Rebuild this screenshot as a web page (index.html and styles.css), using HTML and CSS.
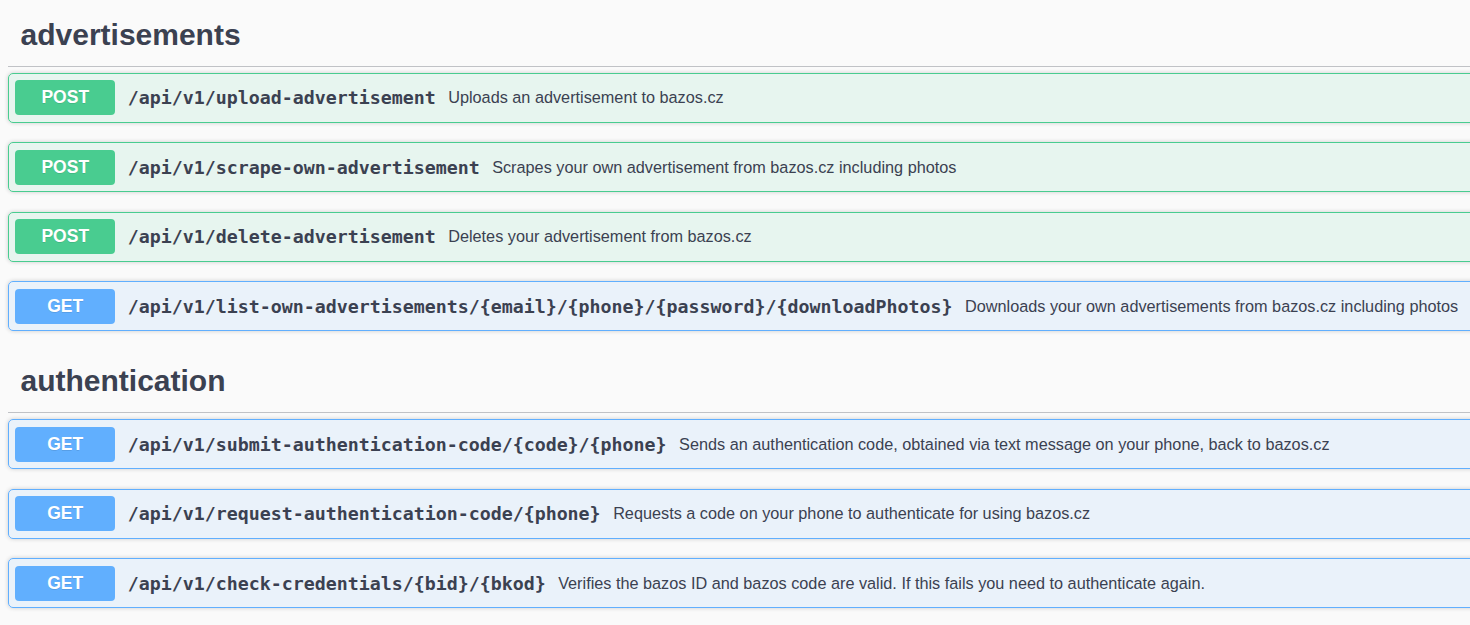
FILE: index.html
```html
<!DOCTYPE html>
<html>
<head>
<meta charset="utf-8">
<link rel="stylesheet" href="styles.css">
</head>
<body>
<div class="wrapper">
  <section class="tag-section">
    <h3 class="tag">advertisements</h3>
    <div class="opblock post">
      <span class="method">POST</span>
      <span class="path">/api/v1/upload-advertisement</span>
      <span class="desc">Uploads an advertisement to bazos.cz</span>
    </div>
    <div class="opblock post">
      <span class="method">POST</span>
      <span class="path">/api/v1/scrape-own-advertisement</span>
      <span class="desc">Scrapes your own advertisement from bazos.cz including photos</span>
    </div>
    <div class="opblock post">
      <span class="method">POST</span>
      <span class="path">/api/v1/delete-advertisement</span>
      <span class="desc">Deletes your advertisement from bazos.cz</span>
    </div>
    <div class="opblock get">
      <span class="method">GET</span>
      <span class="path">/api/v1/list-own-advertisements/{email}/{phone}/{password}/{downloadPhotos}</span>
      <span class="desc">Downloads your own advertisements from bazos.cz including photos</span>
    </div>
  </section>
  <section class="tag-section">
    <h3 class="tag">authentication</h3>
    <div class="opblock get">
      <span class="method">GET</span>
      <span class="path">/api/v1/submit-authentication-code/{code}/{phone}</span>
      <span class="desc">Sends an authentication code, obtained via text message on your phone, back to bazos.cz</span>
    </div>
    <div class="opblock get">
      <span class="method">GET</span>
      <span class="path">/api/v1/request-authentication-code/{phone}</span>
      <span class="desc">Requests a code on your phone to authenticate for using bazos.cz</span>
    </div>
    <div class="opblock get">
      <span class="method">GET</span>
      <span class="path">/api/v1/check-credentials/{bid}/{bkod}</span>
      <span class="desc">Verifies the bazos ID and bazos code are valid. If this fails you need to authenticate again.</span>
    </div>
  </section>
</div>
</body>
</html>
```

FILE: styles.css
```css
html, body {
  margin: 0;
  padding: 0;
  background: #fafafa;
  overflow: hidden;
}

.wrapper {
  width: 1580px;
  margin-left: 8px;
  padding-top: 4.7px;
  font-family: "Liberation Sans", Arial, sans-serif;
  color: #3b4151;
}

.tag-section {
  display: flex;
  flex-direction: column;
}

.tag {
  margin: 0 0 6.3px;
  padding: 12.5px 25px 12.5px 12.5px;
  font-size: 30px;
  line-height: 36px;
  font-weight: 700;
  color: #3b4151;
  border-bottom: 1px solid rgba(59, 65, 81, 0.3);
}

.opblock {
  display: flex;
  align-items: center;
  box-sizing: border-box;
  height: 50px;
  margin: 0 0 19.5px;
  padding: 0 6.25px;
  border: 1px solid;
  border-radius: 5px;
  box-shadow: 0 0 4px rgba(0, 0, 0, 0.19);
}

.opblock.post {
  background: rgba(73, 204, 144, 0.1);
  border-color: #49cc90;
}

.opblock.get {
  background: rgba(97, 175, 254, 0.1);
  border-color: #61affe;
}

.method {
  flex: none;
  width: 100px;
  height: 35px;
  line-height: 35px;
  text-align: center;
  border-radius: 4px;
  color: #fff;
  font-size: 17.5px;
  font-weight: 700;
  text-shadow: 0 1px 0 rgba(0, 0, 0, 0.1);
}

.post .method { background: #49cc90; }
.get .method { background: #61affe; }

.path {
  flex: none;
  padding: 0 12.5px;
  font-family: "DejaVu Sans Mono", monospace;
  font-weight: 700;
  font-size: 18.27px;
  color: #3b4151;
  white-space: nowrap;
}

.desc {
  font-size: 16.25px;
  color: #3b4151;
  white-space: nowrap;
}
```
